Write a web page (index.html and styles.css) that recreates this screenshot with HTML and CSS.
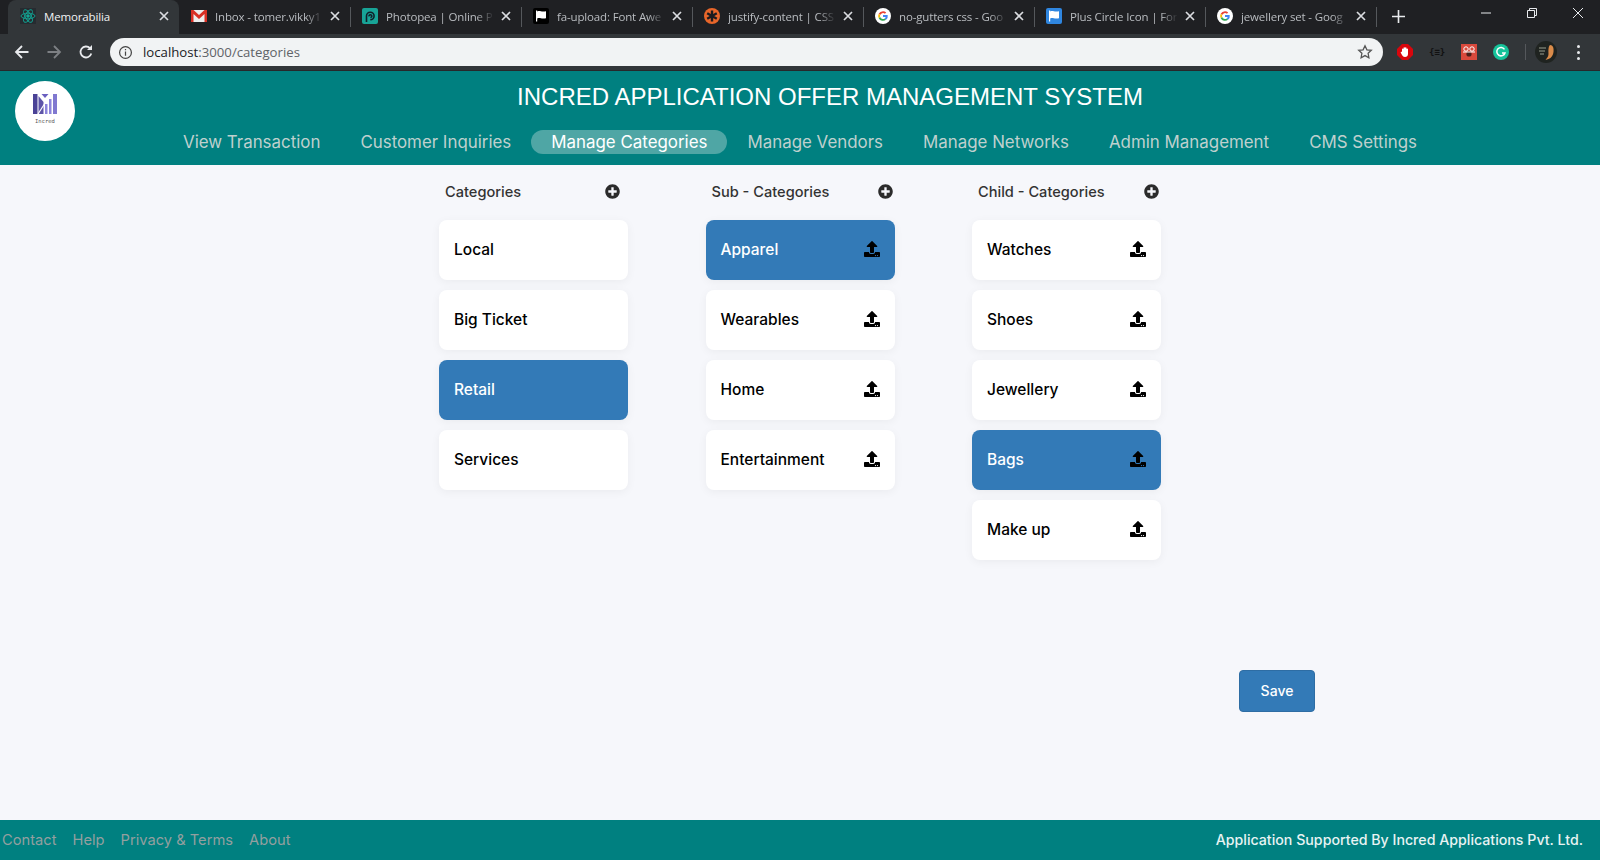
FILE: index.html
```html
<!DOCTYPE html>
<html lang="en">
<head>
    <meta charset="UTF-8">
    <title>Memorabilia</title>
    <link rel="stylesheet" href="styles.css">
</head>
<body>

<svg class="defs" width="0" height="0">
    <symbol id="i-upload" viewBox="0 0 512 512"><path d="M296 384h-80c-13.3 0-24-10.7-24-24V192h-87.7c-17.8 0-26.7-21.5-14.1-34.1L242.3 5.700c7.500-7.500 19.800-7.500 27.300 0l152.200 152.200c12.600 12.600 3.700 34.100-14.100 34.100H320v168c0 13.300-10.700 24-24 24zm216-8v112c0 13.300-10.700 24-24 24H24c-13.300 0-24-10.700-24-24V376c0-13.300 10.700-24 24-24h136v8c0 30.900 25.100 56 56 56h80c30.900 0 56-25.100 56-56v-8h136c13.300 0 24 10.700 24 24zm-124 88c0-11-9-20-20-20s-20 9-20 20 9 20 20 20 20-9 20-20zm64 0c0-11-9-20-20-20s-20 9-20 20 9 20 20 20 20-9 20-20z"/></symbol>
    <symbol id="i-plus" viewBox="0 0 512 512"><path d="M256 8C119 8 8 119 8 256s111 248 248 248 248-111 248-248S393 8 256 8zm144 276c0 6.600-5.400 12-12 12h-92v92c0 6.600-5.400 12-12 12h-56c-6.600 0-12-5.400-12-12v-92h-92c-6.600 0-12-5.400-12-12v-56c0-6.600 5.400-12 12-12h92v-92c0-6.600 5.400-12 12-12h56c6.600 0 12 5.400 12 12v92h92c6.600 0 12 5.400 12 12v56z"/></symbol>
    <symbol id="i-close" viewBox="0 0 10 10"><path d="M1 1l8 8M9 1L1 9" fill="none" stroke="#dadce0" stroke-width="1.700"/></symbol>
    <symbol id="i-google" viewBox="0 0 16 16">
        <circle cx="8" cy="8" r="8" fill="#fff"/>
        <path d="M8 3.200a4.800 4.800 0 0 1 3.200 1.200L9.900 5.700A3 3 0 0 0 5.200 7L3.700 5.800A4.800 4.800 0 0 1 8 3.200z" fill="#ea4335"/>
        <path d="M3.700 5.800 5.200 7a3 3 0 0 0 0 2L3.700 10.200a4.800 4.800 0 0 1 0-4.400z" fill="#fbbc05"/>
        <path d="M5.200 9a3 3 0 0 0 4.500 1.500l1.400 1.200A4.800 4.800 0 0 1 3.700 10.200z" fill="#34a853"/>
        <path d="M12.700 7.100H8v1.900h2.700a2.400 2.400 0 0 1-1 1.500l1.400 1.200a4.800 4.800 0 0 0 1.600-4.600z" fill="#4285f4"/>
    </symbol>
    <symbol id="i-flag" viewBox="0 0 16 16"><path d="M3 2.500h1.200v11H3zM4.200 3.500c2.500-1.200 4 .8 8.800-.2v7c-4.800 1-6.300-1-8.800.2z"/></symbol>
</svg>

<div class="tabstrip">
    <div class="tab tab-active">
        <svg class="favicon" viewBox="0 0 16 16" fill="none" stroke="#12a594" stroke-width=".9">
            <rect width="16" height="16" fill="#262b30" stroke="none"/>
            <ellipse cx="8" cy="8" rx="7" ry="2.800"/>
            <ellipse cx="8" cy="8" rx="7" ry="2.800" transform="rotate(60 8 8)"/>
            <ellipse cx="8" cy="8" rx="7" ry="2.800" transform="rotate(120 8 8)"/>
            <circle cx="8" cy="8" r="1.300" fill="#12a594"/>
        </svg>
        <span class="tab-title">Memorabilia</span>
        <svg class="tab-close"><use href="#i-close"/></svg>
    </div>
    <div class="tab">
        <svg class="favicon" viewBox="0 0 16 16">
            <rect y="2" width="16" height="12" fill="#eee"/>
            <path d="M0 2h2.500L8 7l5.500-5H16v12h-2.500V6L8 11 2.500 6v8H0z" fill="#d93025"/>
        </svg>
        <span class="tab-title">Inbox - tomer.vikky1</span>
        <svg class="tab-close"><use href="#i-close"/></svg>
    </div>
    <div class="tab">
        <svg class="favicon" viewBox="0 0 16 16">
            <rect width="16" height="16" rx="2" fill="#18a497"/>
            <path d="M4.500 14V8a3.800 3.800 0 1 1 3.800 3.800M7 8.300a1.400 1.400 0 1 1 1.400 1.200" fill="none" stroke="#10202a" stroke-width="1.600"/>
        </svg>
        <span class="tab-title">Photopea | Online P</span>
        <svg class="tab-close"><use href="#i-close"/></svg>
    </div>
    <div class="tab">
        <svg class="favicon" viewBox="0 0 16 16">
            <rect width="16" height="16" rx="2" fill="#000"/>
            <use href="#i-flag" fill="#fff"/>
        </svg>
        <span class="tab-title">fa-upload: Font Awe</span>
        <svg class="tab-close"><use href="#i-close"/></svg>
    </div>
    <div class="tab">
        <svg class="favicon" viewBox="0 0 16 16">
            <circle cx="8" cy="8" r="8" fill="#e8662a"/>
            <path d="M8 2.500v11M3.200 5.200l9.600 5.600M12.800 5.200l-9.600 5.600" stroke="#1b1b1f" stroke-width="2.400"/>
        </svg>
        <span class="tab-title">justify-content | CSS</span>
        <svg class="tab-close"><use href="#i-close"/></svg>
    </div>
    <div class="tab">
        <svg class="favicon" viewBox="0 0 16 16"><use href="#i-google"/></svg>
        <span class="tab-title">no-gutters css - Goo</span>
        <svg class="tab-close"><use href="#i-close"/></svg>
    </div>
    <div class="tab">
        <svg class="favicon" viewBox="0 0 16 16">
            <rect width="16" height="16" rx="2" fill="#2f86e0"/>
            <use href="#i-flag" fill="#fff"/>
        </svg>
        <span class="tab-title">Plus Circle Icon | For</span>
        <svg class="tab-close"><use href="#i-close"/></svg>
    </div>
    <div class="tab">
        <svg class="favicon" viewBox="0 0 16 16"><use href="#i-google"/></svg>
        <span class="tab-title">jewellery set - Goog</span>
        <svg class="tab-close"><use href="#i-close"/></svg>
    </div>
    <svg class="new-tab" viewBox="0 0 12 12" fill="none" stroke="#e8eaed" stroke-width="1.500"><path d="M6 0v12M0 6h12"/></svg>
    <div class="win-btns">
        <svg viewBox="0 0 12 12" fill="none" stroke="#e8eaed"><path d="M1 6h10"/></svg>
        <svg viewBox="0 0 12 12" fill="none" stroke="#e8eaed"><path d="M1.500 3.500h7v7h-7zM3.500 3.500v-2h7v7h-2"/></svg>
        <svg viewBox="0 0 12 12" fill="none" stroke="#e8eaed"><path d="M1 1l10 10M11 1L1 11"/></svg>
    </div>
</div>

<div class="toolbar">
    <svg class="nav-btn" viewBox="0 0 16 16" fill="none" stroke="#e8eaed" stroke-width="1.800"><path d="M14.500 8H2M8 2 2 8l6 6"/></svg>
    <svg class="nav-btn" viewBox="0 0 16 16" fill="none" stroke="#7d8084" stroke-width="1.800"><path d="M1.500 8H14M8 2l6 6-6 6"/></svg>
    <svg class="nav-btn" viewBox="0 0 16 16" fill="none" stroke="#e8eaed" stroke-width="1.800"><path d="M13.300 9.500A5.500 5.500 0 1 1 12 4.200"/><path d="M14 1v5H9z" fill="#e8eaed" stroke="none"/></svg>
    <div class="omnibox">
        <svg class="info-icon" viewBox="0 0 16 16" fill="none" stroke="#444" stroke-width="1.300"><circle cx="8" cy="8" r="6.300"/><path d="M8 7v4.500M8 4.300v1.400"/></svg>
        <span class="url"><b>localhost</b>:3000/categories</span>
        <svg class="star-icon" viewBox="0 0 16 16" fill="none" stroke="#555" stroke-width="1.300"><path d="m8 1.800 1.900 4 4.400.5-3.200 3 .8 4.400L8 11.600l-3.900 2.100.8-4.400-3.200-3 4.400-.5z"/></svg>
    </div>
    <div class="extensions">
        <svg viewBox="0 0 16 16"><path d="M5 0h6l5 5v6l-5 5H5l-5-5V5z" fill="#d8060d"/><path d="M5 8V5a.8.800 0 0 1 1.500 0V3.800a.8.800 0 0 1 1.500 0 .8.800 0 0 1 1.500 0V5a.8.800 0 0 1 1.500 0v5c0 2-1.200 3-3 3-1.500 0-2.300-.8-3-2L3.800 8.700c-.4-.8.500-1.400 1.200-.7z" fill="#fff"/></svg>
        <span class="ext-braces">{≡}</span>
        <svg viewBox="0 0 16 16"><rect width="16" height="16" fill="#d9493c"/><circle cx="5" cy="5" r="2.200" fill="none" stroke="#fff"/><circle cx="11" cy="5" r="2.200" fill="none" stroke="#fff"/><circle cx="8" cy="10" r="2.600" fill="#4a1f1a"/><path d="M2 8h12" stroke="#fff"/></svg>
        <svg viewBox="0 0 16 16"><circle cx="8" cy="8" r="8" fill="#15c39a"/><path d="M11.500 5.300A4.200 4.200 0 1 0 12 9H9" fill="none" stroke="#fff" stroke-width="1.500"/></svg>
        <span class="ext-sep"></span>
        <svg class="avatar" viewBox="0 0 22 22"><circle cx="11" cy="11" r="11" fill="#1f2320"/><path d="M15 4c3 0 4 3 3.500 7-.3 3-2 6-5 7l-3 1c1-2 3-3 3-6s-.5-7 1.500-9z" fill="#d98b4a"/><path d="M4 7h7M4 10h6M5 13h4" stroke="#9aa08f"/></svg>
        <span class="kebab"><i></i><i></i><i></i></span>
    </div>
</div>

<header class="site-head">
    <div class="logo-cell">
        <div class="logo">
            <svg viewBox="0 0 26 22">
                <path d="M1 1h4.500v20H1z" fill="#4a4296"/>
                <path d="M6.500 3 11.500 9v12h-5z" fill="#5d54a8"/>
                <path d="M9.500 1h7l-3.500 4z" fill="#6a5fc0"/>
                <path d="M13 11h2.500v10H13z" fill="#8d85dc"/>
                <path d="M17 6h2.500v15H17z" fill="#8d85dc"/>
                <path d="M21 1h4v20h-4z" fill="#8078d0"/>
                <path d="M15 7 6 21" stroke="#fff" stroke-width="1.200"/>
            </svg>
            <span class="logo-name">Incred</span>
        </div>
    </div>
    <div class="head-main">
        <h1 class="app-title">INCRED APPLICATION OFFER MANAGEMENT SYSTEM</h1>
        <nav class="main-nav">
            <a>View Transaction</a>
            <a>Customer Inquiries</a>
            <a class="active">Manage Categories</a>
            <a>Manage Vendors</a>
            <a>Manage Networks</a>
            <a>Admin Management</a>
            <a>CMS Settings</a>
        </nav>
    </div>
</header>

<section class="content">
    <div class="board">
        <div class="col">
            <div class="col-head"><span>Categories</span><svg class="plus"><use href="#i-plus"/></svg></div>
            <div class="card"><span>Local</span></div>
            <div class="card"><span>Big Ticket</span></div>
            <div class="card selected"><span>Retail</span></div>
            <div class="card"><span>Services</span></div>
        </div>
        <div class="col">
            <div class="col-head"><span>Sub - Categories</span><svg class="plus"><use href="#i-plus"/></svg></div>
            <div class="card selected"><span>Apparel</span><svg class="upload"><use href="#i-upload"/></svg></div>
            <div class="card"><span>Wearables</span><svg class="upload"><use href="#i-upload"/></svg></div>
            <div class="card"><span>Home</span><svg class="upload"><use href="#i-upload"/></svg></div>
            <div class="card"><span>Entertainment</span><svg class="upload"><use href="#i-upload"/></svg></div>
        </div>
        <div class="col">
            <div class="col-head"><span>Child - Categories</span><svg class="plus"><use href="#i-plus"/></svg></div>
            <div class="card"><span>Watches</span><svg class="upload"><use href="#i-upload"/></svg></div>
            <div class="card"><span>Shoes</span><svg class="upload"><use href="#i-upload"/></svg></div>
            <div class="card"><span>Jewellery</span><svg class="upload"><use href="#i-upload"/></svg></div>
            <div class="card selected"><span>Bags</span><svg class="upload"><use href="#i-upload"/></svg></div>
            <div class="card"><span>Make up</span><svg class="upload"><use href="#i-upload"/></svg></div>
        </div>
    </div>
    <button class="save-btn">Save</button>
</section>

<footer class="site-foot">
    <div class="foot-links">
        <a>Contact</a>
        <a>Help</a>
        <a>Privacy &amp; Terms</a>
        <a>About</a>
    </div>
    <div class="foot-note">Application Supported By Incred Applications Pvt. Ltd.</div>
</footer>

</body>
</html>
```

FILE: styles.css
```css
* {
    margin: 0;
    padding: 0;
    box-sizing: border-box;
}

html, body {
    height: 100%;
    overflow: hidden;
}

body {
    display: flex;
    flex-direction: column;
    height: 860px;
    background: #f6f7fb;
    font-family: Inter, "Noto Sans", sans-serif;
}

.defs {
    position: absolute;
}

/* browser chrome */
.tabstrip {
    display: flex;
    align-items: flex-end;
    height: 34px;
    padding-left: 8px;
    background: #1f2023;
    font-family: "Open Sans", sans-serif;
    font-size: 11.500px;
    color: #b9bcc0;
}

.tab {
    display: flex;
    align-items: center;
    width: 171px;
    height: 34px;
    padding: 0 7px 2px 12px;
    position: relative;
}

.tab::after {
    content: "";
    position: absolute;
    right: -1px;
    top: 7px;
    bottom: 7px;
    width: 1px;
    background: #55585c;
}

.tab-active {
    background: #323639;
    border-radius: 8px 8px 0 0;
    color: #f1f3f4;
}

.tab-active::after {
    display: none;
}

.favicon {
    flex: none;
    width: 16px;
    height: 16px;
}

.tab-title {
    flex: 1;
    min-width: 0;
    margin-left: 8px;
    overflow: hidden;
    white-space: nowrap;
    letter-spacing: -.15px;
    -webkit-mask-image: linear-gradient(to right, #000 84%, transparent 100%);
    mask-image: linear-gradient(to right, #000 84%, transparent 100%);
}

.tab-active .tab-title {
    -webkit-mask-image: none;
    mask-image: none;
}

.tab-close {
    flex: none;
    width: 10px;
    height: 10px;
    margin: 0 3px 0 7px;
}

.new-tab {
    align-self: center;
    flex: none;
    width: 13px;
    height: 13px;
    margin: 0 0 2px 16px;
}

.win-btns {
    display: flex;
    gap: 34px;
    margin-left: auto;
    padding: 0 16px 15px 0;
    align-self: flex-end;
}

.win-btns svg {
    width: 12px;
    height: 12px;
}

.toolbar {
    display: flex;
    align-items: center;
    height: 37px;
    padding-left: 14px;
    background: #323639;
    border-bottom: 1px solid #26282b;
}

.nav-btn {
    flex: none;
    width: 16px;
    height: 16px;
    margin-right: 16px;
}

.omnibox {
    display: flex;
    align-items: center;
    width: 1273px;
    height: 28px;
    padding: 0 10px 0 8px;
    background: #f1f3f4;
    border-radius: 14px;
    font-family: "Open Sans", sans-serif;
    font-size: 13.200px;
    color: #5f6368;
}

.info-icon {
    width: 15px;
    height: 15px;
    margin-right: 10px;
}

.url b {
    font-weight: 400;
    color: #202124;
}

.star-icon {
    width: 16px;
    height: 16px;
    margin-left: auto;
}

.extensions {
    display: flex;
    align-items: center;
    margin-left: 14px;
}

.extensions svg {
    flex: none;
    width: 16px;
    height: 16px;
    margin-right: 16px;
}

.ext-braces {
    width: 16px;
    margin-right: 16px;
    font-family: "DejaVu Sans Mono", monospace;
    font-size: 9px;
    font-weight: 700;
    text-align: center;
    color: #111;
}

.ext-sep {
    width: 1px;
    height: 16px;
    margin-right: 9px;
    background: #55585c;
}

.extensions .avatar {
    width: 22px;
    height: 22px;
    margin-right: 20px;
}

.kebab {
    display: flex;
    flex-direction: column;
    gap: 3px;
}

.kebab i {
    width: 3px;
    height: 3px;
    border-radius: 50%;
    background: #e8eaed;
}

/* site header */
.site-head {
    display: grid;
    grid-template-columns: 90px 1fr 90px;
    flex: none;
    height: 94px;
    background: #008080;
}

.logo-cell {
    padding: 10px 0 0 15px;
}

.logo {
    display: flex;
    flex-direction: column;
    align-items: center;
    justify-content: center;
    width: 60px;
    height: 60px;
    padding-bottom: 6px;
    border-radius: 50%;
    background: #fff;
}

.logo svg {
    width: 26px;
    height: 22px;
}

.logo-name {
    margin-top: 3px;
    font-family: "DejaVu Sans Mono", monospace;
    font-size: 5.500px;
    color: #555;
}

.head-main {
    display: flex;
    flex-direction: column;
    align-items: center;
}

.app-title {
    margin: 12px 0 0 60px;
    font-family: "Liberation Sans", Arial, sans-serif;
    font-size: 24px;
    font-weight: 400;
    line-height: 28px;
    white-space: nowrap;
    color: #fff;
}

.main-nav {
    display: flex;
    align-items: center;
    margin-top: 19px;
    font-size: 16.900px;
    color: #bfd0ce;
    white-space: nowrap;
}

.main-nav a {
    height: 24px;
    padding: 0 20px;
    border-radius: 12px;
    line-height: 24px;
}

.main-nav .active {
    background: #4fa6a5;
    color: #fff;
}

/* category board */
.content {
    flex: 1;
    padding-left: 439px;
}

.board {
    display: flex;
    gap: 77.500px;
    height: 395px;
}

.col {
    display: flex;
    flex-direction: column;
    gap: 10px;
    width: 189px;
}

.col-head {
    display: flex;
    align-items: center;
    justify-content: space-between;
    height: 45px;
    padding: 8px 2px 0 6px;
    font-size: 14.600px;
    font-weight: 500;
    color: #333;
}

.col:first-child .col-head {
    padding-right: 8px;
}

.plus {
    width: 15px;
    height: 15px;
    fill: #2b2b2b;
}

.card {
    display: flex;
    align-items: center;
    justify-content: space-between;
    flex: none;
    height: 60px;
    padding: 0 15px 2px 15px;
    background: #fff;
    border-radius: 8px;
    box-shadow: 0 2px 10px rgba(0, 0, 0, .05);
    font-size: 15.500px;
    font-weight: 500;
    color: #000;
}

.card.selected {
    background: #337ab7;
    color: #fff;
}

.upload {
    width: 16px;
    height: 16px;
    fill: #000;
}

.save-btn {
    display: block;
    width: 76px;
    height: 42px;
    margin: 110px 0 0 800px;
    padding-bottom: 2px;
    background: #337ab7;
    border: 1px solid #2e6da4;
    border-radius: 4px;
    font-family: inherit;
    font-size: 14px;
    font-weight: 500;
    color: #fff;
}

/* footer */
.site-foot {
    display: flex;
    align-items: center;
    justify-content: space-between;
    flex: none;
    height: 40px;
    padding: 0 17px 2px 2px;
    background: #008080;
    font-size: 14.200px;
}

.foot-links {
    display: flex;
    gap: 16px;
    padding-top: 1px;
    font-size: 14.700px;
    color: #939f9f;
}

.foot-note {
    font-weight: 500;
    color: #e8f3f3;
}
```
